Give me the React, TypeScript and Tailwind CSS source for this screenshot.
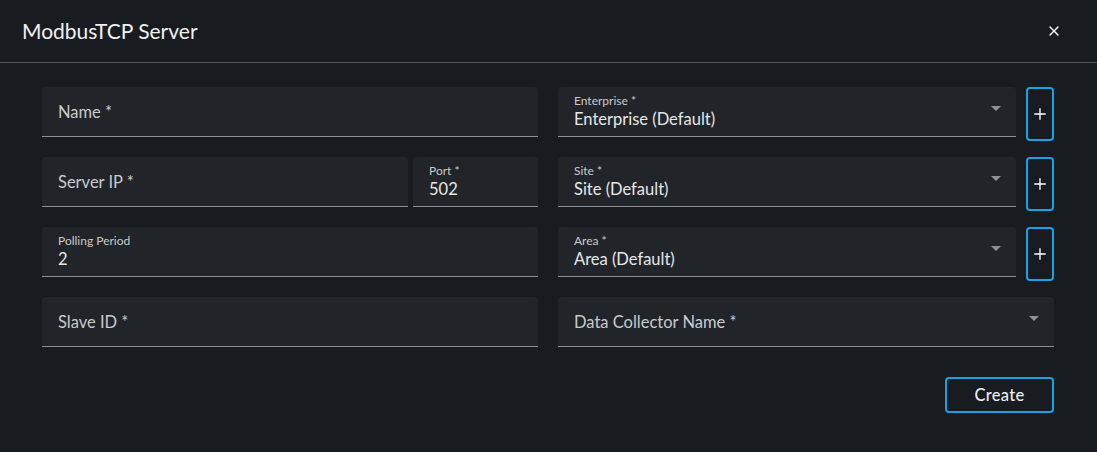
import { X, Plus } from 'lucide-react';

const font = { fontFamily: 'Lato, "Noto Sans", sans-serif' };

function TextField({ label, value, className = '' }: { label: string; value?: string; className?: string }) {
  return (
    <div className={`h-[50px] rounded-t-[4px] bg-[#212529] border-b border-[#8c8f92] px-4 flex flex-col justify-center ${className}`}>
      {value ? (
        <>
          <span className="text-[12px] leading-[14px] text-[#c9cacb]">{label}</span>
          <span className="text-[16.5px] leading-[20px] text-[#e6e7e8] mt-[1px]">{value}</span>
        </>
      ) : (
        <span className="text-[16.5px] leading-[20px] text-[#c9cacb]">{label}</span>
      )}
    </div>
  );
}

function SelectField({ label, value }: { label: string; value?: string }) {
  return (
    <div className="flex-1 h-[50px] rounded-t-[4px] bg-[#212529] border-b border-[#8c8f92] pl-4 pr-[15px] flex items-center">
      <div className="flex-1 flex flex-col justify-center">
        {value ? (
          <>
            <span className="text-[12px] leading-[14px] text-[#c9cacb]">{label}</span>
            <span className="text-[16.5px] leading-[20px] text-[#e6e7e8] mt-[1px]">{value}</span>
          </>
        ) : (
          <span className="text-[16.5px] leading-[20px] text-[#c9cacb]">{label}</span>
        )}
      </div>
      <svg width="10" height="5" viewBox="0 0 10 5" className="mb-[6px]">
        <path d="M0 0 L10 0 L5 5 Z" fill="#8f9295" />
      </svg>
    </div>
  );
}

function AddButton() {
  return (
    <button className="w-[28px] h-[54px] shrink-0 rounded-[4px] border-2 border-[#16a2e6] flex items-center justify-center text-white">
      <Plus size={18} strokeWidth={1.8} />
    </button>
  );
}

export default function App() {
  return (
    <div className="w-[1097px] h-[452px] bg-[#181c20] text-white" style={font}>
      <div className="h-[63px] flex items-center justify-between pl-[22px] pr-[35px] border-b border-[#4f5257]">
        <h2 className="text-[21px] text-[#f0f0f0]">ModbusTCP Server</h2>
        <X size={16} strokeWidth={2} className="text-white" />
      </div>
      <div className="pl-[42px] pr-[43px] pt-[24px]">
        <div className="grid grid-cols-2 gap-x-[20px] gap-y-[20px]">
          <TextField label="Name *" />
          <div className="flex h-[50px] gap-[10px] items-start">
            <SelectField label="Enterprise *" value="Enterprise (Default)" />
            <AddButton />
          </div>

          <div className="flex gap-[5px]">
            <TextField label="Server IP *" className="flex-1" />
            <TextField label="Port *" value="502" className="w-[125px]" />
          </div>
          <div className="flex h-[50px] gap-[10px] items-start">
            <SelectField label="Site *" value="Site (Default)" />
            <AddButton />
          </div>

          <TextField label="Polling Period" value="2" />
          <div className="flex h-[50px] gap-[10px] items-start">
            <SelectField label="Area *" value="Area (Default)" />
            <AddButton />
          </div>

          <TextField label="Slave ID *" />
          <div className="flex h-[50px]">
            <SelectField label="Data Collector Name *" />
          </div>
        </div>
        <div className="flex justify-end mt-[30px]">
          <button className="w-[109px] h-[36px] rounded-[4px] border-2 border-[#16a2e6] text-[16.5px] font-medium text-[#ededed] tracking-[0.3px]">
            Create
          </button>
        </div>
      </div>
    </div>
  );
}
